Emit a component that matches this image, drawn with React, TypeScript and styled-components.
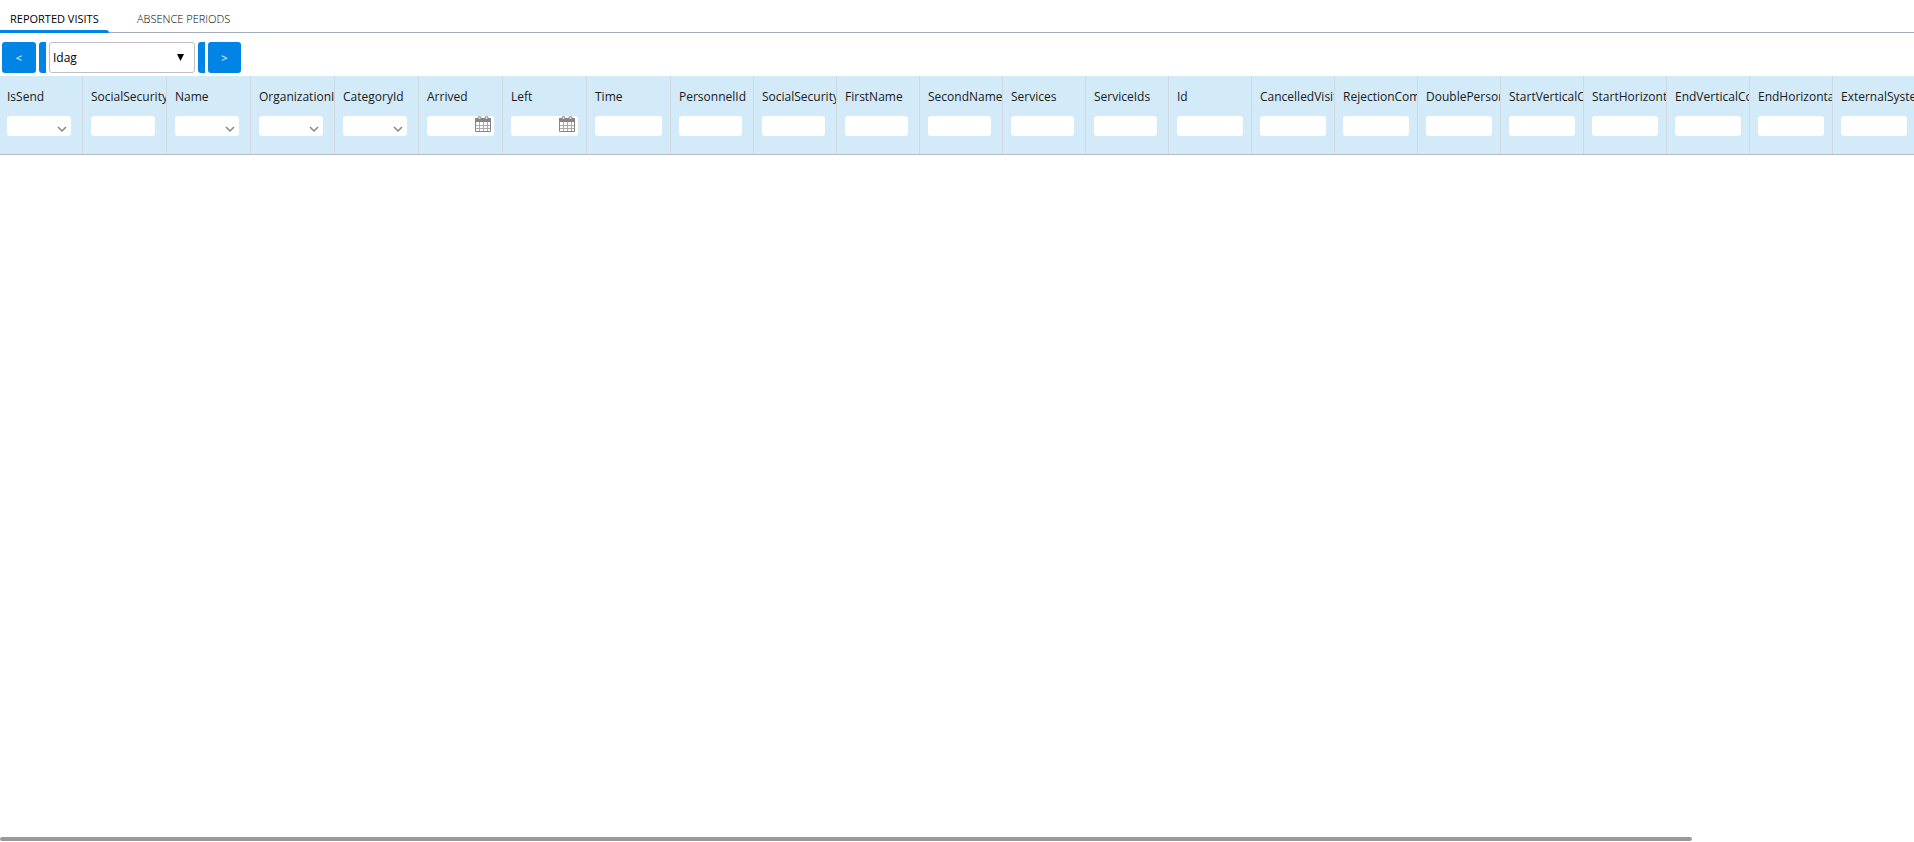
import React from "react";
import styled, { createGlobalStyle, css } from "styled-components";

const GlobalStyle = createGlobalStyle`
  *, *::before, *::after { box-sizing: border-box; }
  body {
    margin: 0;
    background: #fff;
    color: #1a1a1a;
    font-family: "Segoe UI", "Open Sans", "Noto Sans", sans-serif;
    font-size: 12px;
    line-height: 16px;
  }
  button, input, select { font: inherit; color: inherit; }
`;

const Page = styled.div`
  display: flex;
  flex-direction: column;
  min-height: 100vh;
  overflow: hidden;
`;

const TabList = styled.nav`
  display: flex;
  height: 33px;
  border-bottom: 1px solid #a6abb8;
`;

const Tab = styled.button<{ $active?: boolean }>`
  position: relative;
  height: 33px;
  padding: 4px 28px 0 10px;
  border: 0;
  background: none;
  color: #000;
  font-size: 11px;
  font-weight: 300;
  text-align: left;
  white-space: nowrap;
  ${(p) =>
    p.$active &&
    css`
      width: 109px;
      padding-right: 0;
      margin-right: 18px;
      font-weight: 400;
      &::after {
        content: "";
        position: absolute;
        left: 0;
        right: 0;
        bottom: 0;
        height: 3px;
        background: #0084e6;
        border-top-right-radius: 3px;
      }
    `}
`;

const Toolbar = styled.div`
  display: flex;
  gap: 3px;
  padding: 9px 2px 3px;
`;

const StepButton = styled.button<{ $width: number }>`
  width: ${(p) => p.$width}px;
  height: 31px;
  padding: 0;
  border: 0;
  border-radius: 3px;
  background: #0084e6;
  color: #fff;
  font-size: 11px;
`;

const StepEdge = styled.button`
  width: 7px;
  height: 31px;
  padding: 0;
  border: 0;
  border-radius: 3px 0 0 3px;
  background: #0084e6;
`;

const PeriodField = styled.div`
  position: relative;
  width: 146px;
`;

const PeriodSelect = styled.select`
  appearance: none;
  width: 100%;
  height: 31px;
  padding: 0 24px 0 3px;
  border: 1px solid #bfbfc4;
  border-radius: 3px;
  background: #fff;
  color: #000;
`;

const PeriodArrow = styled.svg`
  position: absolute;
  top: 12px;
  right: 11px;
  width: 7px;
  height: 7px;
  pointer-events: none;
`;

const GridScroller = styled.div`
  flex: 1;
  overflow: hidden;
`;

const Grid = styled.table`
  table-layout: fixed;
  width: 1916px;
  min-width: 100%;
  border-collapse: separate;
  border-spacing: 0;
  background: #d3eaf8;
`;

const TitleCell = styled.th`
  height: 40px;
  padding: 1px 0 0 8px;
  border-right: 1px solid #cfd8e0;
  overflow: hidden;
  font-weight: 400;
  text-align: left;
  white-space: nowrap;
  &:first-child { padding-left: 7px; }
`;

const FilterCell = styled.td`
  height: 39px;
  padding: 0 0 0 8px;
  border-right: 1px solid #cfd8e0;
  border-bottom: 1px solid #b9bbc2;
  vertical-align: top;
  &:first-child { padding-left: 7px; }
`;

const FilterBox = styled.div<{ $width: number }>`
  position: relative;
  width: ${(p) => p.$width}px;
  height: 20px;
`;

const controlStyle = css`
  display: block;
  appearance: none;
  width: 100%;
  height: 20px;
  padding: 0 4px;
  border: 0;
  border-radius: 3px;
  background: #fff;
`;

const FilterInput = styled.input`${controlStyle}`;
const FilterSelect = styled.select`${controlStyle}`;

const Chevron = styled.svg`
  position: absolute;
  right: 4px;
  bottom: 3px;
  width: 10px;
  height: 7px;
  pointer-events: none;
`;

const DateButton = styled.button`
  position: absolute;
  top: 0;
  right: 3px;
  width: 16px;
  height: 17px;
  padding: 0;
  border: 0;
  background: none;
  svg { display: block; }
`;

const ScrollTrack = styled.div`
  height: 5px;
  padding-bottom: 1px;
`;

const ScrollThumb = styled.div`
  width: 88.4%;
  height: 4px;
  border-radius: 2px;
  background: #999;
`;

type Kind = "text" | "select" | "date";
interface Column {
  title: string;
  kind: Kind;
  width: number;
  box: number;
}

const col = (title: string, width: number, box: number, kind: Kind = "text"): Column => ({ title, width, box, kind });

const columns: Column[] = [
  col("IsSend", 83, 64, "select"),
  col("SocialSecurityN", 84, 64),
  col("Name", 84, 64, "select"),
  col("OrganizationID", 84, 64, "select"),
  col("CategoryId", 84, 64, "select"),
  col("Arrived", 84, 67, "date"),
  col("Left", 84, 67, "date"),
  col("Time", 84, 67),
  col("PersonnelId", 83, 63),
  col("SocialSecurity", 83, 63),
  col("FirstName", 83, 63),
  col("SecondName", 83, 63),
  col("Services", 83, 63),
  col("ServiceIds", 83, 63),
  col("Id", 83, 66),
  col("CancelledVisit", 83, 66),
  col("RejectionCom", 83, 66),
  col("DoublePerson", 83, 66),
  col("StartVerticalCo", 83, 66),
  col("StartHorizonta", 83, 66),
  col("EndVerticalCo", 83, 66),
  col("EndHorizontal", 83, 66),
  col("ExternalSystem", 83, 66),
];

function CalendarIcon() {
  return (
    <svg width="16" height="17" viewBox="0 0 16 17" fill="none" aria-hidden="true">
      <path d="M0.5 2.5h15v13h-15z" fill="#fff" stroke="#858585" />
      <path d="M0 2h16v4H0z" fill="#858585" />
      <path d="M4.5 6v9M8.5 6v9M12.5 6v9M1 9.5h14M1 12.5h14" stroke="#aaa" />
      <path d="M3 3.5V2a1.5 1.5 0 0 1 3 0v1.5zM10 3.5V2a1.5 1.5 0 0 1 3 0v1.5z" fill="#d3dbe0" stroke="#858585" />
    </svg>
  );
}

function Filter({ column }: { column: Column }) {
  const label = `Filter ${column.title}`;
  return (
    <FilterBox $width={column.box}>
      {column.kind === "select" ? (
        <>
          <FilterSelect aria-label={label} />
          <Chevron viewBox="0 0 10 7" fill="none" aria-hidden="true">
            <path d="M1 1l4 4 4-4" stroke="#858585" strokeWidth="1.5" />
          </Chevron>
        </>
      ) : (
        <FilterInput type="text" aria-label={label} />
      )}
      {column.kind === "date" && (
        <DateButton type="button" aria-label={`Pick date for ${column.title}`}>
          <CalendarIcon />
        </DateButton>
      )}
    </FilterBox>
  );
}

export default function App() {
  return (
    <Page>
      <GlobalStyle />
      <TabList role="tablist">
        <Tab type="button" role="tab" aria-selected="true" $active>REPORTED VISITS</Tab>
        <Tab type="button" role="tab" aria-selected="false">ABSENCE PERIODS</Tab>
      </TabList>
      <Toolbar>
        <StepButton type="button" $width={34} aria-label="Previous period">&lt;</StepButton>
        <StepEdge type="button" aria-label="Previous day" />
        <PeriodField>
          <PeriodSelect aria-label="Period" defaultValue="Idag">
            <option>Idag</option>
          </PeriodSelect>
          <PeriodArrow viewBox="0 0 7 7" aria-hidden="true">
            <path d="M0 0h7L3.5 7z" fill="#000" />
          </PeriodArrow>
        </PeriodField>
        <StepEdge type="button" aria-label="Next day" />
        <StepButton type="button" $width={33} aria-label="Next period">&gt;</StepButton>
      </Toolbar>
      <GridScroller>
        <Grid>
          <colgroup>
            {columns.map((c, i) => (
              <col key={i} width={c.width} />
            ))}
          </colgroup>
          <thead>
            <tr>
              {columns.map((c, i) => (
                <TitleCell key={i} scope="col">{c.title}</TitleCell>
              ))}
            </tr>
            <tr>
              {columns.map((c, i) => (
                <FilterCell key={i}>
                  <Filter column={c} />
                </FilterCell>
              ))}
            </tr>
          </thead>
        </Grid>
      </GridScroller>
      <ScrollTrack>
        <ScrollThumb />
      </ScrollTrack>
    </Page>
  );
}
